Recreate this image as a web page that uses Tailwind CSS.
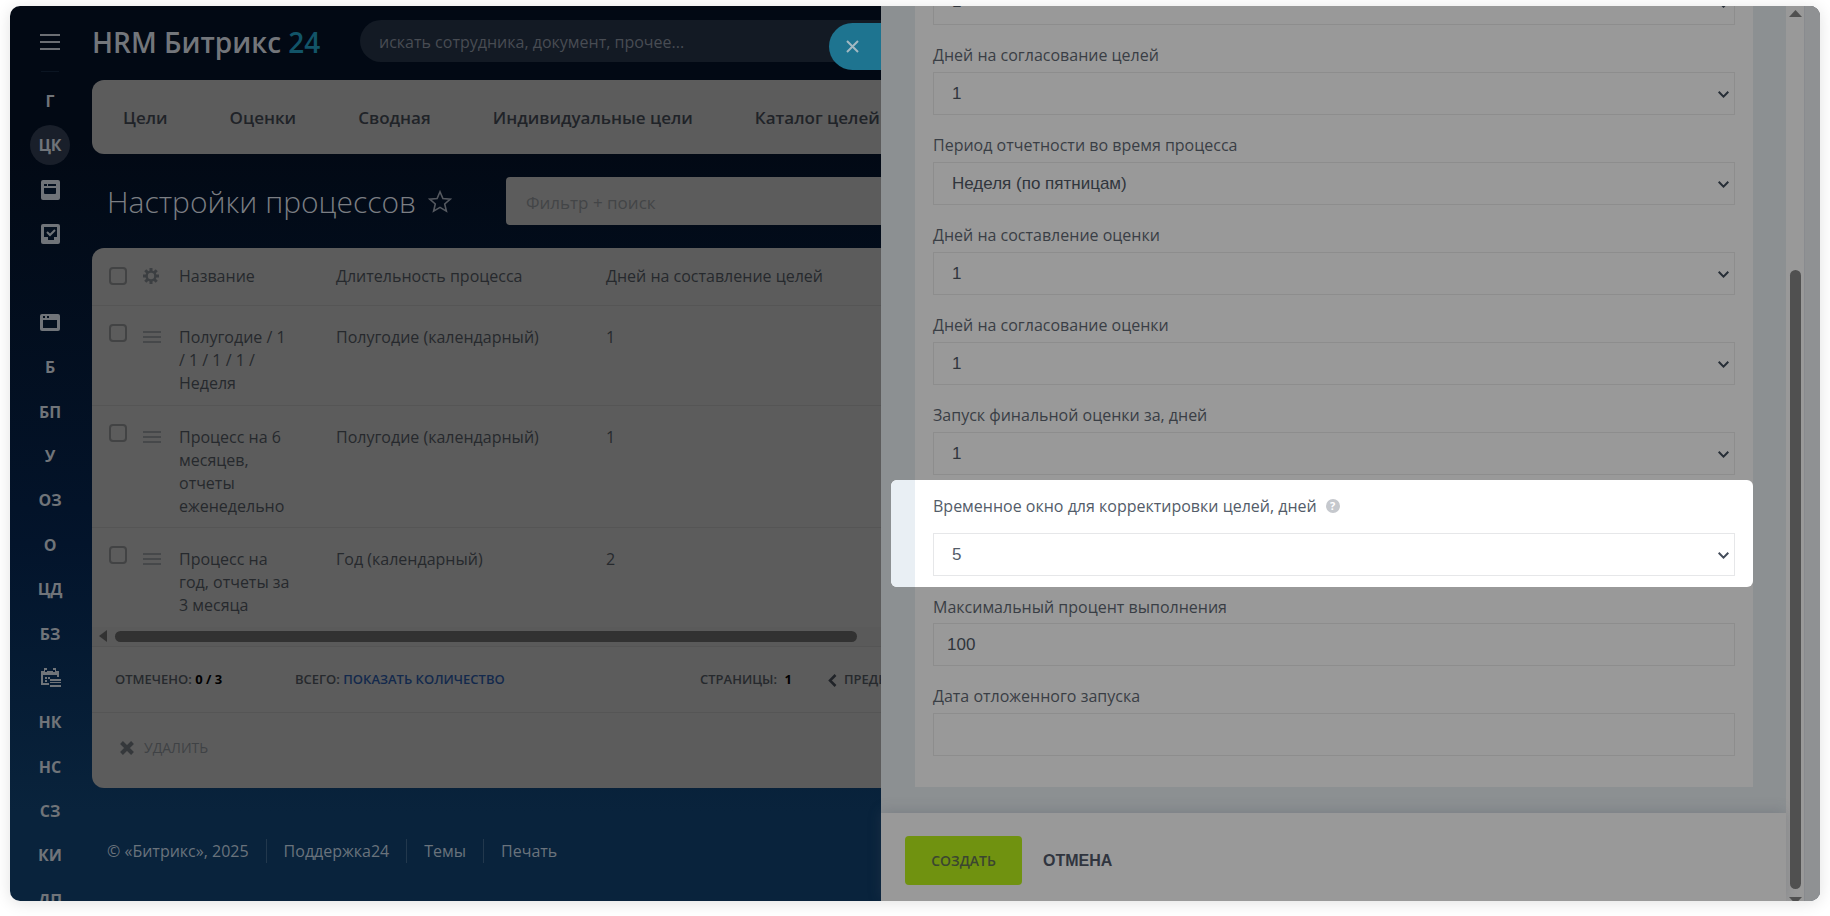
<!DOCTYPE html>
<html lang="ru">
<head>
    <meta charset="UTF-8">
    <meta name="viewport" content="width=device-width, initial-scale=1.0">
    <title>Настройки процессов</title>
    <script src="https://cdn.jsdelivr.net/npm/@tailwindcss/browser@4"></script>
</head>
<body class="h-screen overflow-hidden bg-white px-[10px] pt-[6px] pb-[15px] font-['Open_Sans','Noto_Sans',sans-serif]">
    <div class="flex h-full overflow-hidden rounded-[10px] bg-linear-to-b from-[#020914] from-15% via-[#03142b] via-60% to-[#09233c] to-90% shadow-[0_2px_16px_rgba(0,0,0,0.12)]">

        <!-- Left part: portal page -->
        <div class="flex w-[871px] shrink-0 overflow-hidden">
            <!-- Sidebar -->
            <aside class="flex w-20 shrink-0 flex-col text-base font-bold text-[#707479]">
                <div class="flex h-[73px] shrink-0 flex-col items-center pt-7">
                    <button type="button" aria-label="Меню">
                        <svg class="block" width="20" height="16" viewBox="0 0 20 16" fill="#6b6e73"><path d="M0 0h20v2H0zM0 7h20v2H0zM0 14h20v2H0z"/></svg>
                    </button>
                    <div class="mt-[21px] h-px w-[18px] bg-[#0b1522]"></div>
                </div>
                <nav class="-mb-[21px] flex flex-1 flex-col items-center justify-between">
                    <a href="#" class="flex h-11 items-center">Г</a>
                    <a href="#" class="flex h-11 items-center"><span class="flex size-10 items-center justify-center rounded-full bg-[#191f2a]">ЦК</span></a>
                    <a href="#" class="flex h-11 items-center" aria-label="Лента">
                        <svg width="19" height="20" viewBox="0 0 19 20"><rect width="19" height="20" rx="2" fill="#707479"/><path d="M3 4h3v2H3zM7 4h8v2H7zM3 8h12v5a1 1 0 0 1-1 1H4a1 1 0 0 1-1-1z" fill="#04101f"/></svg>
                    </a>
                    <a href="#" class="flex h-11 items-center" aria-label="Задачи">
                        <svg width="19" height="20" viewBox="0 0 19 20"><rect width="19" height="20" rx="2" fill="#707479"/><path d="M3 3h13v10h-3v3H7v-3H3z" fill="#04101f"/><path d="M6 8l3 3 5-5" stroke="#707479" stroke-width="2" fill="none"/></svg>
                    </a>
                    <span class="h-11"></span>
                    <a href="#" class="flex h-11 items-center" aria-label="Окно">
                        <svg width="20" height="17" viewBox="0 0 20 17"><rect width="20" height="17" rx="2" fill="#707479"/><path d="M3 2h2v2H3zM7 2h2v2H7zM3 6h14v8H3z" fill="#04101f"/></svg>
                    </a>
                    <a href="#" class="flex h-11 items-center">Б</a>
                    <a href="#" class="flex h-11 items-center">БП</a>
                    <a href="#" class="flex h-11 items-center">У</a>
                    <a href="#" class="flex h-11 items-center">ОЗ</a>
                    <a href="#" class="flex h-11 items-center">О</a>
                    <a href="#" class="flex h-11 items-center">ЦД</a>
                    <a href="#" class="flex h-11 items-center">БЗ</a>
                    <a href="#" class="flex h-11 items-center" aria-label="Календарь">
                        <svg width="21" height="19" viewBox="0 0 21 19"><path d="M18 9V4H2v12h7" stroke="#707479" stroke-width="2" fill="none"/><path d="M1 3h18v4H1zM4 0h3v3H4zM13 0h3v3h-3zM5 9h2v2H5zM8 9h2v2H8zM5 12h2v2H5zM10 11h11v2H10zM10 14h11v1H10zM10 17h11v2H10z" fill="#707479"/><path d="M5 4h2v-2h-2zM13 4h2v-2h-2z" fill="#061830"/></svg>
                    </a>
                    <a href="#" class="flex h-11 items-center">НК</a>
                    <a href="#" class="flex h-11 items-center">НС</a>
                    <a href="#" class="flex h-11 items-center">СЗ</a>
                    <a href="#" class="flex h-11 items-center">КИ</a>
                    <a href="#" class="flex h-11 items-center">ДП</a>
                </nav>
            </aside>

            <!-- Content -->
            <main class="relative ml-0.5 flex-1 overflow-hidden whitespace-nowrap">
                <header class="mb-1 flex h-[70px] items-center">
                    <div class="w-[268px] shrink-0 pt-0.5 text-[28px] font-semibold text-[#73767b]">HRM Битрикс <span class="text-[#125468]">24</span></div>
                    <input type="text" aria-label="Поиск" placeholder="искать сотрудника, документ, прочее..." class="h-[42px] flex-1 rounded-l-full bg-[#131a24] pt-0.5 pl-[19px] text-base text-[#484c53] placeholder:text-[#484c53]">
                </header>
                <button type="button" aria-label="Закрыть" class="absolute top-[17px] right-0 flex h-[47px] w-[52px] items-center rounded-l-full bg-[#1e7490] pl-[17px]">
                    <svg width="13" height="13" viewBox="0 0 13 13" stroke="#a3b9c2" stroke-width="2"><path d="M1 1l11 11M12 1L1 12"/></svg>
                </button>

                <nav class="flex h-[74px] items-center gap-[62px] rounded-l-[12px] bg-[#5c5c5c] pt-0.5 pl-[31px] text-[17px] font-semibold text-[#202328]">
                    <a href="#">Цели</a>
                    <a href="#">Оценки</a>
                    <a href="#">Сводная</a>
                    <a href="#">Индивидуальные цели</a>
                    <a href="#">Каталог целей</a>
                </nav>

                <div class="flex h-[94px] items-center pl-[15px]">
                    <div class="flex w-[399px] shrink-0 items-center gap-3">
                        <h1 class="text-[30px] font-light text-[#7b7e83]">Настройки процессов</h1>
                        <svg width="24" height="23" viewBox="0 0 24 23" fill="none" stroke="#54585f" stroke-width="1.6"><path d="M12 1.8l2.9 6.8 7.4.6-5.6 4.8 1.7 7.2L12 17.4l-6.4 3.8 1.7-7.2L1.700 9.200l7.400-.6z"/></svg>
                    </div>
                    <input type="text" aria-label="Фильтр" placeholder="Фильтр + поиск" class="h-12 flex-1 rounded-l-[4px] bg-[#5c5c5c] pt-0.5 pl-5 text-[17px] text-[#434547] placeholder:text-[#434547]">
                </div>

                <!-- Grid -->
                <section class="rounded-l-[12px] bg-[#5c5c5c] text-[#26292d]">
                    <table class="w-full table-fixed text-left text-base leading-[23px]">
                        <colgroup>
                            <col class="w-[51px]"><col class="w-[36px]"><col class="w-[157px]"><col class="w-[270px]"><col>
                        </colgroup>
                        <thead>
                            <tr class="h-[57px] border-b border-[#555]">
                                <th class="pl-[17px] font-normal"><input type="checkbox" aria-label="Выбрать все" class="block size-[18px] appearance-none rounded-[4px] border-2 border-[#424344]"></th>
                                <th class="font-normal">
                                    <svg width="16" height="16" viewBox="0 0 16 16"><g stroke="#3c3f42" stroke-width="3"><path d="M8 0v16M0 8h16M2.300 2.300l11.400 11.400M13.700 2.300L2.300 13.700"/></g><circle cx="8" cy="8" r="5.500" fill="#3c3f42"/><circle cx="8" cy="8" r="3.200" fill="#5c5c5c"/></svg>
                                </th>
                                <th class="font-normal">Название</th>
                                <th class="font-normal">Длительность процесса</th>
                                <th class="font-normal">Дней на составление целей</th>
                            </tr>
                        </thead>
                        <tbody class="align-top">
                            <tr class="border-b border-[#555]">
                                <td class="pt-[18px] pl-[17px]"><input type="checkbox" aria-label="Полугодие" class="block size-[18px] appearance-none rounded-[4px] border-2 border-[#424344]"></td>
                                <td class="pt-[25px]"><svg width="18" height="13" viewBox="0 0 18 13" fill="#46484a"><path d="M0 0h18v2H0zM0 5h18v2H0zM0 10h18v2H0z"/></svg></td>
                                <td class="pt-5 pb-[10px]">Полугодие / 1<br>/ 1 / 1 / 1 /<br>Неделя</td>
                                <td class="pt-5">Полугодие (календарный)</td>
                                <td class="pt-5">1</td>
                            </tr>
                            <tr class="border-b border-[#555]">
                                <td class="pt-[18px] pl-[17px]"><input type="checkbox" aria-label="Процесс на 6 месяцев" class="block size-[18px] appearance-none rounded-[4px] border-2 border-[#424344]"></td>
                                <td class="pt-[25px]"><svg width="18" height="13" viewBox="0 0 18 13" fill="#46484a"><path d="M0 0h18v2H0zM0 5h18v2H0zM0 10h18v2H0z"/></svg></td>
                                <td class="pt-5 pb-[9px]">Процесс на 6<br>месяцев,<br>отчеты<br>еженедельно</td>
                                <td class="pt-5">Полугодие (календарный)</td>
                                <td class="pt-5">1</td>
                            </tr>
                            <tr>
                                <td class="pt-[18px] pl-[17px]"><input type="checkbox" aria-label="Процесс на год" class="block size-[18px] appearance-none rounded-[4px] border-2 border-[#424344]"></td>
                                <td class="pt-[25px]"><svg width="18" height="13" viewBox="0 0 18 13" fill="#46484a"><path d="M0 0h18v2H0zM0 5h18v2H0zM0 10h18v2H0z"/></svg></td>
                                <td class="pt-5 pb-[10px]">Процесс на<br>год, отчеты за<br>3 месяца</td>
                                <td class="pt-5">Год (календарный)</td>
                                <td class="pt-5">2</td>
                            </tr>
                        </tbody>
                    </table>
                    <!-- Horizontal scroll -->
                    <div class="flex h-5 items-center gap-2 border-b border-[#555] bg-[#5a5a5a] pr-6 pl-[7px]">
                        <svg width="8" height="12" viewBox="0 0 8 12" fill="#323232"><path d="M8 0v12L0 6z"/></svg>
                        <div class="h-[11px] flex-1 rounded-full bg-[#323232]"></div>
                    </div>
                    <div class="flex h-[66px] items-center border-b border-[#555] pt-0.5 pl-[23px] text-[13px] font-semibold">
                        <div class="w-[180px] shrink-0">ОТМЕЧЕНО: <span class="font-bold text-black">0 / 3</span></div>
                        <div class="w-[405px] shrink-0">ВСЕГО: <a href="#" class="text-[#13294c]">ПОКАЗАТЬ КОЛИЧЕСТВО</a></div>
                        <div class="w-32 shrink-0">СТРАНИЦЫ: <span class="ml-1 font-bold text-black">1</span></div>
                        <a href="#" class="flex shrink-0 items-center gap-[7px]">
                            <svg width="9" height="13" viewBox="0 0 9 13" fill="none" stroke="#202328" stroke-width="2.500"><path d="M7.500 1L2 6.500 7.500 12"/></svg>ПРЕДЫДУЩАЯ
                        </a>
                    </div>
                    <div class="flex h-[75px] items-center pb-1 pl-7">
                        <button type="button" class="flex items-center gap-[10px] text-sm text-[#3f4245]">
                            <svg width="14" height="14" viewBox="0 0 14 14" stroke="#35383b" stroke-width="4"><path d="M1.500 1.500l11 11M12.500 1.500l-11 11"/></svg>УДАЛИТЬ
                        </button>
                    </div>
                </section>

                <footer class="mt-[51px] flex h-6 items-center gap-[17px] pl-[15px] text-base text-[#6a737c]">
                    <span>© «Битрикс», 2025</span>
                    <span class="h-6 w-px bg-[#22384d]"></span>
                    <a href="#">Поддержка24</a>
                    <span class="h-6 w-px bg-[#22384d]"></span>
                    <a href="#">Темы</a>
                    <span class="h-6 w-px bg-[#22384d]"></span>
                    <a href="#">Печать</a>
                </footer>
            </main>
        </div>

        <!-- Slider panel -->
        <div class="flex min-w-0 flex-1 bg-[#999]">
            <div class="flex min-w-0 flex-1 flex-col">
                <div class="min-h-0 flex-1 overflow-hidden bg-[#8c9092] pr-[33px] pl-[34px]">
                    <form class="bg-[#999] px-[18px] pb-[31px] text-base text-[#393e45]">
                        <div class="relative -mt-6">
                            <select aria-label="Дней на составление целей" class="block h-[43px] w-full appearance-none border border-[#8d8d8d] px-[18px] pb-1 font-['Liberation_Sans',sans-serif] text-[17px] text-[#30353c]"><option>1</option></select>
                            <svg class="absolute top-[19px] right-[6px]" width="11" height="7" viewBox="0 0 11 7" fill="none" stroke="#262d36" stroke-width="2"><path d="M.700.800l4.800 4.800L10.300.800"/></svg>
                        </div>
                        <div class="pt-[18px]">
                            <label for="approve" class="block leading-6">Дней на согласование целей</label>
                            <div class="relative mt-[5px]">
                                <select id="approve" class="block h-[43px] w-full appearance-none border border-[#8d8d8d] px-[18px] font-['Liberation_Sans',sans-serif] text-[17px] text-[#30353c]"><option>1</option></select>
                                <svg class="absolute top-[19px] right-[6px]" width="11" height="7" viewBox="0 0 11 7" fill="none" stroke="#262d36" stroke-width="2"><path d="M.700.800l4.800 4.800L10.300.800"/></svg>
                            </div>
                        </div>
                        <div class="pt-[18px]">
                            <label for="period" class="block leading-6">Период отчетности во время процесса</label>
                            <div class="relative mt-[5px]">
                                <select id="period" class="block h-[43px] w-full appearance-none border border-[#8d8d8d] px-[18px] font-['Liberation_Sans',sans-serif] text-[17px] text-[#30353c]"><option>Неделя (по пятницам)</option></select>
                                <svg class="absolute top-[19px] right-[6px]" width="11" height="7" viewBox="0 0 11 7" fill="none" stroke="#262d36" stroke-width="2"><path d="M.700.800l4.800 4.800L10.300.800"/></svg>
                            </div>
                        </div>
                        <div class="pt-[18px]">
                            <label for="rate" class="block leading-6">Дней на составление оценки</label>
                            <div class="relative mt-[5px]">
                                <select id="rate" class="block h-[43px] w-full appearance-none border border-[#8d8d8d] px-[18px] font-['Liberation_Sans',sans-serif] text-[17px] text-[#30353c]"><option>1</option></select>
                                <svg class="absolute top-[19px] right-[6px]" width="11" height="7" viewBox="0 0 11 7" fill="none" stroke="#262d36" stroke-width="2"><path d="M.700.800l4.800 4.800L10.300.800"/></svg>
                            </div>
                        </div>
                        <div class="pt-[18px]">
                            <label for="rate-approve" class="block leading-6">Дней на согласование оценки</label>
                            <div class="relative mt-[5px]">
                                <select id="rate-approve" class="block h-[43px] w-full appearance-none border border-[#8d8d8d] px-[18px] font-['Liberation_Sans',sans-serif] text-[17px] text-[#30353c]"><option>1</option></select>
                                <svg class="absolute top-[19px] right-[6px]" width="11" height="7" viewBox="0 0 11 7" fill="none" stroke="#262d36" stroke-width="2"><path d="M.700.800l4.800 4.800L10.300.800"/></svg>
                            </div>
                        </div>
                        <div class="pt-[18px]">
                            <label for="final" class="block leading-6">Запуск финальной оценки за, дней</label>
                            <div class="relative mt-[5px]">
                                <select id="final" class="block h-[43px] w-full appearance-none border border-[#8d8d8d] px-[18px] font-['Liberation_Sans',sans-serif] text-[17px] text-[#30353c]"><option>1</option></select>
                                <svg class="absolute top-[19px] right-[6px]" width="11" height="7" viewBox="0 0 11 7" fill="none" stroke="#262d36" stroke-width="2"><path d="M.700.800l4.800 4.800L10.300.800"/></svg>
                            </div>
                        </div>

                        <!-- Highlighted field -->
                        <div class="mt-[5px] -mr-[18px] -ml-[42px] flex overflow-hidden rounded-[6px] bg-white text-[#535c69]">
                            <div class="w-6 bg-[#e9eff4]"></div>
                            <div class="flex-1 px-[18px] pt-[14px] pb-[11px]">
                                <div class="flex items-center gap-[9px]">
                                    <label for="window" class="block leading-6">Временное окно для корректировки целей, дней</label>
                                    <span class="flex size-[14px] items-center justify-center rounded-full bg-[#c5c8cd] text-[11px] font-bold text-white">?</span>
                                </div>
                                <div class="relative mt-[15px]">
                                    <select id="window" class="block h-[43px] w-full appearance-none border border-[#e6e7e9] bg-white px-[18px] font-['Liberation_Sans',sans-serif] text-[17px] text-[#535c69]"><option>5</option></select>
                                    <svg class="absolute top-[19px] right-[6px]" width="11" height="7" viewBox="0 0 11 7" fill="none" stroke="#434c5a" stroke-width="2"><path d="M.700.800l4.800 4.800L10.300.800"/></svg>
                                </div>
                            </div>
                        </div>

                        <div class="pt-2">
                            <label for="percent" class="block leading-6">Максимальный процент выполнения</label>
                            <input id="percent" type="text" value="100" class="mt-1 block h-[43px] w-full border border-[#8d8d8d] px-[13px] font-['Liberation_Sans',sans-serif] text-[17px] text-[#30353c]">
                        </div>
                        <div class="pt-[18px]">
                            <label for="date" class="block leading-6">Дата отложенного запуска</label>
                            <input id="date" type="text" class="mt-[5px] block h-[43px] w-full border border-[#8d8d8d] px-[13px] font-['Liberation_Sans',sans-serif] text-[17px] text-[#30353c]">
                        </div>
                    </form>
                </div>
                <div class="flex h-[88px] shrink-0 items-center gap-[21px] pt-[7px] pl-6 shadow-[0_-2px_12px_rgba(70,80,95,0.25)]">
                    <button type="button" class="h-[49px] w-[117px] rounded-[4px] bg-[#709210] text-sm font-semibold text-[#3b4630]">СОЗДАТЬ</button>
                    <button type="button" class="font-['Liberation_Sans',sans-serif] text-base font-bold text-[#30353f]">ОТМЕНА</button>
                </div>
            </div>
            <!-- Vertical scroll -->
            <div class="flex w-[18px] shrink-0 flex-col items-center overflow-hidden">
                <svg class="mt-1 shrink-0" width="13" height="7" viewBox="0 0 13 7" fill="#505050"><path d="M0 7h13L6.500 0z"/></svg>
                <div class="mt-[253px] mb-2 w-[11px] flex-1 rounded-full bg-[#505050]"></div>
                <svg class="-mb-[3px] shrink-0" width="13" height="7" viewBox="0 0 13 7" fill="#505050"><path d="M0 0h13L6.500 7z"/></svg>
            </div>
            <div class="w-4 shrink-0 border-l border-[#898b8f] bg-[#8f9193]"></div>
        </div>
    </div>
</body>
</html>
